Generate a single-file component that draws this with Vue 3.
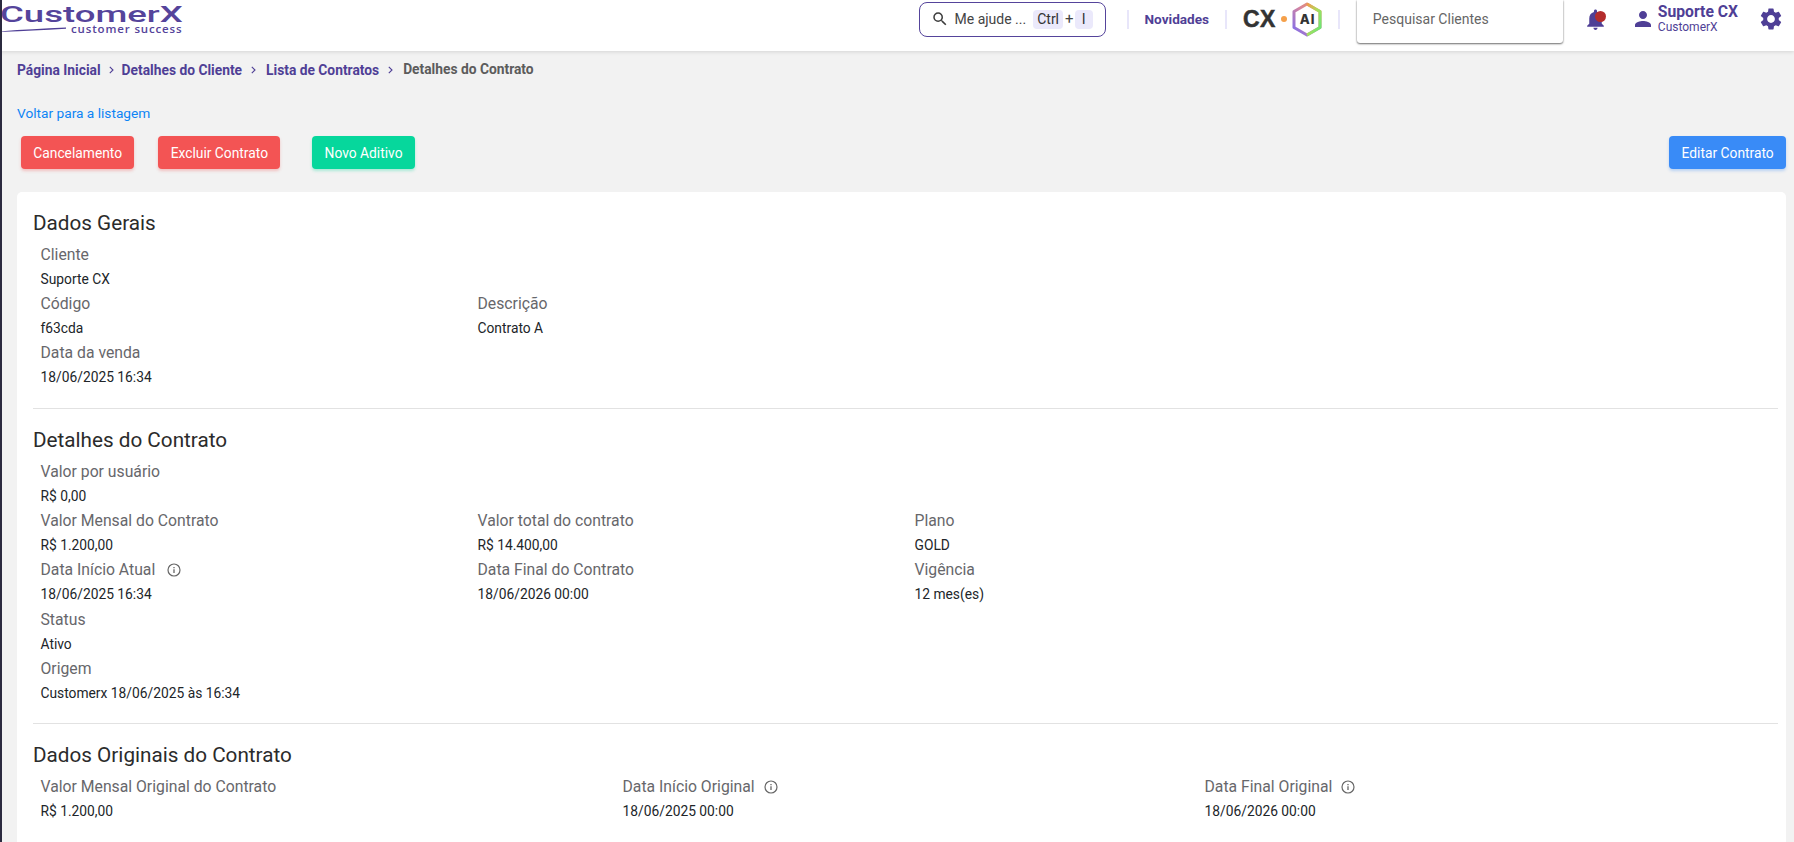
<script setup>
const general = [
  [{ label: 'Cliente', value: 'Suporte CX' }],
  [{ label: 'Código', value: 'f63cda' }, { label: 'Descrição', value: 'Contrato A' }],
  [{ label: 'Data da venda', value: '18/06/2025 16:34' }],
]
const details = [
  [{ label: 'Valor por usuário', value: 'R$ 0,00' }],
  [{ label: 'Valor Mensal do Contrato', value: 'R$ 1.200,00' }, { label: 'Valor total do contrato', value: 'R$ 14.400,00' }, { label: 'Plano', value: 'GOLD' }],
  [{ label: 'Data Início Atual', value: '18/06/2025 16:34', info: true }, { label: 'Data Final do Contrato', value: '18/06/2026 00:00' }, { label: 'Vigência', value: '12 mes(es)' }],
  [{ label: 'Status', value: 'Ativo' }],
  [{ label: 'Origem', value: 'Customerx 18/06/2025 às 16:34' }],
]
const original = [
  { label: 'Valor Mensal Original do Contrato', value: 'R$ 1.200,00' },
  { label: 'Data Início Original', value: '18/06/2025 00:00', info: true },
  { label: 'Data Final Original', value: '18/06/2026 00:00', info: true },
]
const sections = [
  { title: 'Dados Gerais', rows: general },
  { title: 'Detalhes do Contrato', rows: details },
]
</script>

<template>
  <div class="page">
    <header class="topbar">
      <div class="logo">
        <div class="logo-main">CustomerX</div>
        <div class="logo-sub">
          <svg width="65" height="6" viewBox="0 0 65 6"><path d="M0 5.2 Q30 3 65 1.5 L65 2.8 Q30 5 4 5.8 L0 5.8Z" fill="#4f3f96" /></svg>
          <span>customer success</span>
        </div>
      </div>
      <div class="top-right">
        <div class="help">
          <svg class="help-icon" width="18" height="18" viewBox="0 0 24 24"><path fill="#3c3c3c" d="M15.5 14h-.79l-.28-.27A6.47 6.47 0 0 0 16 9.5 6.5 6.5 0 1 0 9.5 16c1.61 0 3.09-.59 4.23-1.57l.27.28v.79l5 4.99L20.49 19l-4.99-5zm-6 0C7.01 14 5 11.99 5 9.5S7.01 5 9.5 5 14 7.01 14 9.5 11.99 14 9.5 14z" /></svg>
          <span class="help-text">Me ajude ...</span>
          <kbd>Ctrl</kbd><span class="plus">+</span><kbd class="kbd-i">I</kbd>
        </div>
        <span class="divider first"></span>
        <span class="news">Novidades</span>
        <span class="divider"></span>
        <div class="cx-ai">
          <span class="cx">CX</span>
          <span class="dot"></span>
          <svg width="30" height="35" viewBox="0 0 30 35">
            <defs>
              <linearGradient id="hexa" x1="0" y1="0" x2="1" y2="1">
                <stop offset="0" stop-color="#f29b4a" />
                <stop offset=".5" stop-color="#a8e05c" />
                <stop offset="1" stop-color="#5ee87a" />
              </linearGradient>
              <linearGradient id="hexb" x1="0" y1="1" x2="1" y2="0">
                <stop offset="0" stop-color="#7b6cf0" />
                <stop offset=".55" stop-color="#d585a0" />
                <stop offset="1" stop-color="#f29b4a" />
              </linearGradient>
            </defs>
            <path d="M15 2 L28 9.5 V25.5 L15 33 L2 25.5 V9.5Z" fill="#fff" stroke="url(#hexb)" stroke-width="3" stroke-linejoin="round" />
            <path d="M15 2 L28 9.5 V25.5 L15 33" fill="none" stroke="url(#hexa)" stroke-width="3" stroke-linejoin="round" />
            <text x="15.5" y="22.2" text-anchor="middle" class="ai-text">AI</text>
          </svg>
        </div>
        <span class="divider"></span>
        <div class="search">Pesquisar Clientes</div>
        <div class="bell">
          <svg width="25" height="25" viewBox="0 0 24 24"><path fill="#4f3f96" d="M12 22c1.1 0 2-.9 2-2h-4c0 1.1.9 2 2 2zm6-6v-5c0-3.07-1.63-5.64-4.5-6.32V4c0-.83-.67-1.5-1.5-1.5s-1.5.67-1.5 1.5v.68C7.64 5.36 6 7.92 6 11v5l-2 2v1h16v-1l-2-2z" /></svg>
          <span class="bell-badge"></span>
        </div>
        <svg class="user-icon" width="24" height="24" viewBox="0 0 24 24"><path fill="#4f3f96" d="M12 12c2.21 0 4-1.79 4-4s-1.79-4-4-4-4 1.79-4 4 1.79 4 4 4zm0 2c-2.67 0-8 1.34-8 4v2h16v-2c0-2.66-5.33-4-8-4z" /></svg>
        <div class="user">
          <div class="user-name">Suporte CX</div>
          <div class="user-org">CustomerX</div>
        </div>
        <svg class="gear" width="26" height="26" viewBox="0 0 24 24"><path fill="#4f3f96" d="M19.14 12.94c.04-.3.06-.61.06-.94 0-.32-.02-.64-.07-.94l2.03-1.58a.49.49 0 0 0 .12-.61l-1.92-3.32a.488.488 0 0 0-.59-.22l-2.39.96c-.5-.38-1.03-.7-1.62-.94l-.36-2.54a.484.484 0 0 0-.48-.41h-3.84c-.24 0-.43.17-.47.41l-.36 2.54c-.59.24-1.13.57-1.62.94l-2.39-.96c-.22-.08-.47 0-.59.22L2.74 8.87c-.12.21-.08.47.12.61l2.03 1.58c-.05.3-.09.63-.09.94s.02.64.07.94l-2.03 1.58a.49.49 0 0 0-.12.61l1.92 3.32c.12.22.37.29.59.22l2.39-.96c.5.38 1.03.7 1.62.94l.36 2.54c.05.24.24.41.48.41h3.84c.24 0 .44-.17.47-.41l.36-2.54c.59-.24 1.13-.56 1.62-.94l2.39.96c.22.08.47 0 .59-.22l1.92-3.32c.12-.22.07-.47-.12-.61l-2.01-1.58zM12 15.6c-1.98 0-3.6-1.62-3.6-3.6s1.62-3.6 3.6-3.6 3.6 1.62 3.6 3.6-1.62 3.6-3.6 3.6z" /></svg>
      </div>
    </header>

    <main class="content">
      <nav class="crumbs">
        <a>Página Inicial</a>
        <svg class="chev first" width="5" height="8" viewBox="0 0 5 8"><path d="M.8.8 4 4 .8 7.2" fill="none" stroke="#4f3f96" stroke-width="1.1" /></svg>
        <a>Detalhes do Cliente</a>
        <svg class="chev" width="5" height="8" viewBox="0 0 5 8"><path d="M.8.8 4 4 .8 7.2" fill="none" stroke="#4f3f96" stroke-width="1.1" /></svg>
        <a>Lista de Contratos</a>
        <svg class="chev" width="5" height="8" viewBox="0 0 5 8"><path d="M.8.8 4 4 .8 7.2" fill="none" stroke="#4f3f96" stroke-width="1.1" /></svg>
        <span class="current">Detalhes do Contrato</span>
      </nav>
      <a class="back">Voltar para a listagem</a>
      <div class="actions">
        <button class="btn red">Cancelamento</button>
        <button class="btn red second">Excluir Contrato</button>
        <button class="btn green">Novo Aditivo</button>
        <button class="btn blue">Editar Contrato</button>
      </div>
      <section class="card">
        <template v-for="section in sections" :key="section.title">
          <h2>{{ section.title }}</h2>
          <div v-for="(row, i) in section.rows" :key="i" class="row">
            <div v-for="field in row" :key="field.label" class="field">
              <div class="label">
                {{ field.label }}
                <svg v-if="field.info" class="info" width="14" height="14" viewBox="0 0 14 14"><circle cx="7" cy="7" r="6" fill="none" stroke="#666" stroke-width="1.2" /><path d="M7 6.3v3.7M7 3.9v1.3" stroke="#666" stroke-width="1.3" /></svg>
              </div>
              <div class="value">{{ field.value }}</div>
            </div>
          </div>
          <hr />
        </template>
        <h2>Dados Originais do Contrato</h2>
        <div class="row thirds">
          <div v-for="field in original" :key="field.label" class="field">
            <div class="label">
              {{ field.label }}
              <svg v-if="field.info" class="info" width="14" height="14" viewBox="0 0 14 14"><circle cx="7" cy="7" r="6" fill="none" stroke="#666" stroke-width="1.2" /><path d="M7 6.3v3.7M7 3.9v1.3" stroke="#666" stroke-width="1.3" /></svg>
            </div>
            <div class="value">{{ field.value }}</div>
          </div>
        </div>
      </section>
    </main>
  </div>
</template>

<style>
html, body { margin: 0; height: 100%; overflow: hidden; background: #f2f2f2; }
</style>

<style scoped>
.page {
  height: 842px;
  overflow: hidden;
  display: flex;
  flex-direction: column;
  font-family: Roboto, "Liberation Sans", sans-serif;
  background: #f2f2f2;
  border-left: 2px solid #2b2a3f;
  box-sizing: border-box;
}
.topbar {
  height: 51px;
  flex: none;
  margin-left: -2px;
  display: flex;
  align-items: flex-start;
  justify-content: space-between;
  background: #fff;
  box-shadow: 0 1px 4px rgba(0, 0, 0, .12);
  position: relative;
  z-index: 2;
}
.logo { padding: 4px 0 0 0; color: #55449b; width: 186px; height: 34px; }
.logo-main {
  font-weight: 500;
  font-size: 22px;
  line-height: 22px;
  transform: scale(1.66, .98);
  transform-origin: 0 0;
  white-space: nowrap;
  height: 19px;
}
.logo-sub { display: flex; align-items: center; gap: 5px; height: 11px; white-space: nowrap; padding-left: 1px; }
.logo-sub svg { flex: none; }
.logo-sub span { font-size: 11.5px; font-weight: 600; letter-spacing: .85px; line-height: 11px; font-family: "Open Sans", sans-serif; }
.top-right { display: flex; align-items: center; height: 36px; margin-top: 1px; }
.help {
  width: 187px;
  height: 35px;
  box-sizing: border-box;
  border: 1px solid #55449b;
  border-radius: 8px;
  display: flex;
  align-items: center;
  padding-left: 11px;
  font-size: 14px;
  color: #444;
}
.help-text { margin-left: 6px; margin-right: 7px; }
kbd { font: inherit; font-size: 14px; background: #ebe9fb; border-radius: 4px; padding: 0 4px; height: 19px; line-height: 19px; color: #333; }
.kbd-i { width: 11px; padding: 0 3.5px; text-align: center; }
.plus { margin: 0 1px 0 2px; font-size: 15px; }
.divider { width: 2px; height: 19px; background: #e8e6fa; margin: 0 16px; }
.divider.first { margin-left: 21px; }
.news { font-size: 13.6px; font-weight: 700; color: #4f3f96; }
.cx-ai { display: flex; align-items: center; gap: 5px; }
.cx { font-family: "Liberation Sans", sans-serif; font-weight: 700; font-size: 23px; color: #333; letter-spacing: .4px; -webkit-text-stroke: .5px #333; }
.dot { width: 6px; height: 6px; border-radius: 50%; background: #f5a04a; }
.ai-text { font: 800 13px Inter, sans-serif; letter-spacing: .8px; fill: #333; }
.search {
  width: 206px;
  height: 43px;
  margin: -1px 0 0 1px;
  align-self: flex-start;
  box-sizing: border-box;
  padding: 9px 16px 0;
  background: #fff;
  color: #666;
  font-size: 14px;
  line-height: 20px;
  border-radius: 0 0 3px 3px;
  box-shadow: 0 1px 2px rgba(0, 0, 0, .55), 0 0 2px rgba(0, 0, 0, .15);
}
.bell { position: relative; width: 25px; height: 25px; margin-left: 20px; }
.bell-badge { position: absolute; right: 2px; top: 4px; width: 11px; height: 11px; background: #b32c2c; border-radius: 50%; }
.user-icon { margin-left: 23px; }
.user { margin-left: 3px; color: #4f3f96; white-space: nowrap; }
.user-name { font-size: 15.7px; font-weight: 700; line-height: 15px; margin-top: -2px; }
.user-org { font-size: 12px; line-height: 12px; margin-top: 2px; }
.gear { margin: 0 10px 0 20px; }

.content { flex: 1; padding: 0 8px 0 15px; min-height: 0; }
.crumbs { display: flex; align-items: center; height: 38px; font-size: 13.8px; }
.crumbs a { color: #4f3f96; font-weight: 700; }
.chev { margin: 0 10px 0 9px; flex: none; }
.chev.first { margin: 0 8px; }
.current { color: #5c5c5c; font-weight: 700; margin-bottom: 2px; }
.back { display: block; margin-top: 14px; font-size: 13.7px; line-height: 20px; color: #0d84f5; }
.actions { display: flex; align-items: center; margin-top: 13px; padding-left: 4px; }
.btn {
  height: 33px;
  border: 0;
  border-radius: 4px;
  color: #fff;
  font-family: inherit;
  font-size: 13.8px;
  padding: 0 12.3px;
}
.red { background: #f35454; box-shadow: 0 2px 3px rgba(243, 84, 84, .3); }
.second { margin-left: 24px; }
.green { background: #06d79c; margin-left: 32px; box-shadow: 0 2px 3px rgba(6, 215, 156, .3); }
.blue { background: #398bf7; margin-left: auto; box-shadow: 0 2px 3px rgba(57, 139, 247, .3); }
.card {
  margin-top: 23px;
  background: #fff;
  border-radius: 5px;
  padding: 16px 8px 0 16px;
  height: 700px;
}
h2 { margin: 0 0 5px; font-size: 20.7px; font-weight: 400; line-height: 30px; color: #2b2b2b; }
.row { display: grid; grid-template-columns: repeat(4, 437px); padding-left: 7.5px; }
.row.thirds { grid-template-columns: repeat(3, 582px); }
.thirds .info { margin-left: 9px; }
.field { height: 49.2px; }
.label { font-size: 15.75px; line-height: 24px; color: #67676b; display: flex; align-items: center; white-space: nowrap; }
.value { font-size: 13.8px; line-height: 25px; color: #212529; white-space: nowrap; }
.info { margin-left: 12px; }
hr { border: 0; border-top: 1px solid #e2e2e2; margin: 17.2px 0 16.3px; }
</style>
